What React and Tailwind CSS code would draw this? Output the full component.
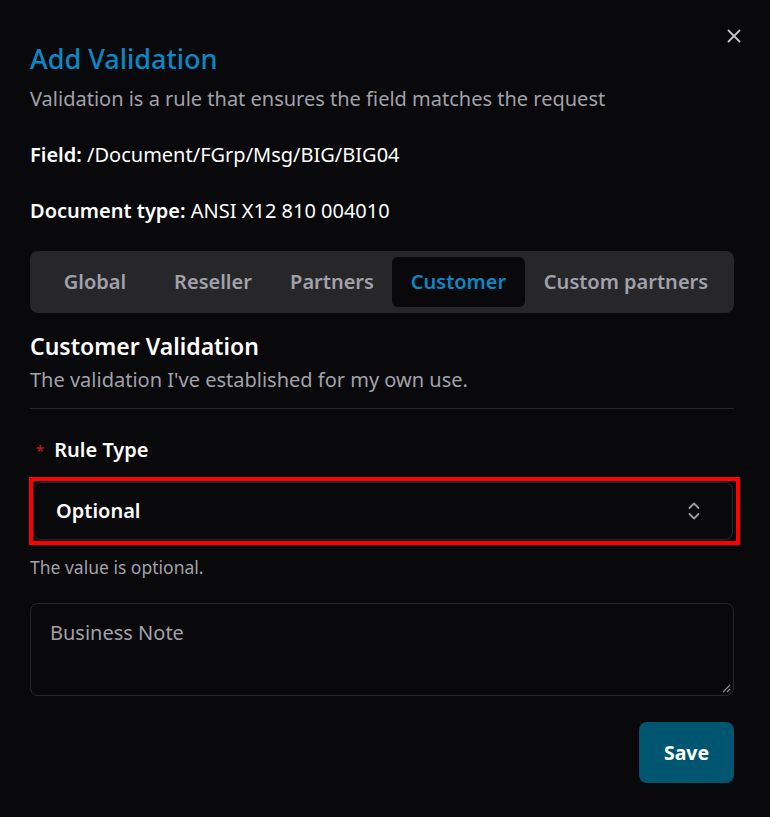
import React from "react";

const font = { fontFamily: '"Noto Sans", "Open Sans", sans-serif' };

export default function App() {
  const tabs = [
    { t: "Global", w: "w-[118px]" },
    { t: "Reseller", w: "w-[118px]" },
    { t: "Partners", w: "w-[120px]" },
    { t: "Customer", w: "w-[133px]" },
    { t: "Custom partners", w: "w-[202px]" },
  ];
  return (
    <div className="w-[770px] h-[817px] bg-[#09090b] text-white relative" style={font}>
      <button className="absolute left-[726px] top-[28px] text-[#c4c4c8]">
        <svg width="16" height="16" viewBox="0 0 16 16" fill="none" stroke="currentColor" strokeWidth="1.8" strokeLinecap="round">
          <path d="M2.5 2.5L13.5 13.5M13.5 2.5L2.5 13.5" />
        </svg>
      </button>
      <div className="pl-[30px] pr-[36px] pt-[41px] flex flex-col">
        <h1 className="text-[27px] leading-[36px] font-medium text-[#0a88c6]">Add Validation</h1>
        <p className="text-[20px] leading-[28px] text-[#a1a1aa] mt-[8px]">Validation is a rule that ensures the field matches the request</p>
        <p className="text-[20px] leading-[28px] mt-[28px]"><span className="font-semibold">Field:</span> /Document/FGrp/Msg/BIG/BIG04</p>
        <p className="text-[20px] leading-[28px] mt-[28px]"><span className="font-semibold">Document type:</span> ANSI X12 810 004010</p>

        <div className="mt-[26px] h-[62px] rounded-[8px] bg-[#27272a] flex items-center pl-[6px] pr-[7px]">
          {tabs.map(({ t, w }) => (
            <div
              key={t}
              className={
                w +
                " h-[50px] flex items-center justify-center rounded-[6px] text-[20px] font-semibold " +
                (t === "Customer" ? "bg-[#09090b] text-[#0a88c6]" : "text-[#a1a1aa]")
              }
            >
              {t}
            </div>
          ))}
        </div>

        <h2 className="mt-[18px] text-[23px] leading-[30px] font-semibold">Customer Validation</h2>
        <p className="text-[20px] leading-[28px] text-[#a1a1aa] mt-[5px]">The validation I've established for my own use.</p>
        <div className="h-px bg-[#27272a] mt-[14px]" />

        <div className="mt-[27px] flex items-center text-[20px] leading-[28px] font-semibold">
          <span className="text-[#b91c1c] text-[15px] ml-[6px] mr-[10px]">*</span>
          <span>Rule Type</span>
        </div>

        <div className="mt-[13px] -ml-[1px] -mr-[6px] border-[4px] border-[#ff0000] pt-[1px] pb-[1px] pr-[3px]">
          <div className="h-[58px] rounded-[8px] border border-[#27272a] flex items-center justify-between pl-[22px] pr-[31px]">
            <span className="text-[20px] font-semibold">Optional</span>
            <svg width="14" height="20" viewBox="0 0 14 20" fill="none" stroke="#9a9aa2" strokeWidth="1.8" strokeLinecap="round" strokeLinejoin="round">
              <path d="M2.5 7L7 2.5L11.5 7" />
              <path d="M2.5 13L7 17.5L11.5 13" />
            </svg>
          </div>
        </div>

        <p className="mt-[10px] text-[17.5px] leading-[24px] text-[#a1a1aa]">The value is optional.</p>

        <div className="mt-[24px] h-[93px] rounded-[8px] border border-[#27272a] relative pl-[19px] pt-[15px]">
          <span className="text-[20px] leading-[28px] text-[#a1a1aa]">Business Note</span>
          <svg className="absolute right-[2px] bottom-[2px]" width="10" height="10" viewBox="0 0 10 10" stroke="#8a8a90" strokeWidth="1.2">
            <path d="M9 2L2 9M9 6L6 9" />
          </svg>
        </div>

        <div className="mt-[26px] flex justify-end">
          <button className="w-[95px] h-[61px] rounded-[8px] bg-[#005571] text-white text-[19.5px] font-bold">Save</button>
        </div>
      </div>
    </div>
  );
}
